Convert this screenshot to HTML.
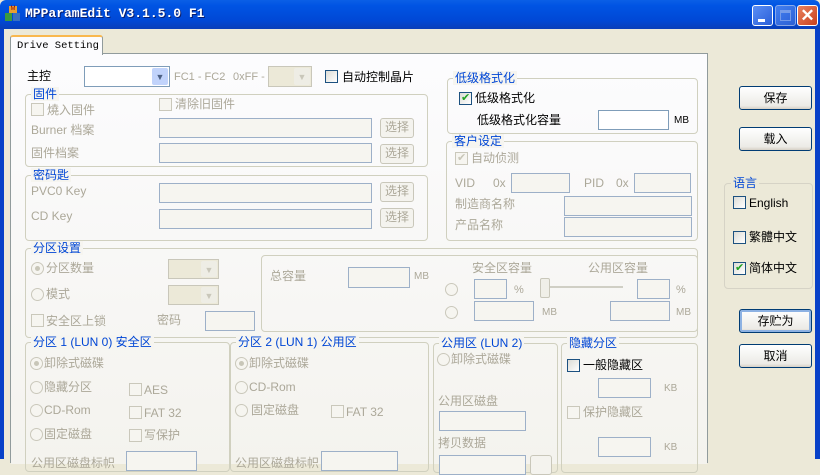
<!DOCTYPE html>
<html><head><meta charset="utf-8">
<style>
*{box-sizing:border-box;margin:0;padding:0}
body{width:820px;height:459px;overflow:hidden;background:#ece9d8;font-family:"Liberation Sans","Noto Sans CJK SC",sans-serif;font-size:12px;color:#000;position:relative}
div,span{position:absolute}
.t{white-space:nowrap;line-height:14px}
.g{color:#aca899}
.gb{border:1px solid #d0d0bf;border-radius:4px}
.gt{color:#0046d5;background:#f6f5f0;padding:0 2px;line-height:14px;white-space:nowrap}
.in{background:#fff;border:1px solid #7f9db9}
.ind{background:#f6f5f0;border:1px solid #9db0c8}
.btn{border:1px solid #003c74;border-radius:3px;background:linear-gradient(#fff,#ecebe6 85%,#d6d0c5);text-align:center;line-height:22px;font-size:12px}
.bd{border:1px solid #c9c7ba;border-radius:3px;background:#f4f3ee;color:#aca899;text-align:center;line-height:17px;font-size:12px}
.cb{width:13px;height:13px;border:1px solid #1c5180;background:linear-gradient(135deg,#dcdcd6,#fff)}
.cbd{width:13px;height:13px;border:1px solid #cac8bb;background:#f6f5f0}
.rd{width:13px;height:13px;border:1px solid #cac8bb;border-radius:50%;background:#f6f5f0}
.rd.on::after{content:"";position:absolute;left:3px;top:3px;width:5px;height:5px;border-radius:50%;background:#c8c6b8}
.ck::after{content:"✔";position:absolute;left:1px;top:-2px;font-size:11px;color:#21a121}
.ckd::after{content:"✔";position:absolute;left:1px;top:-2px;font-size:11px;color:#c8c6b8}
.cmb{border:1px solid #7f9db9;background:#fff}
.cmbd{border:1px solid #c9c7ba;background:#ece9d8}
.arr{right:1px;top:1px;bottom:1px;width:16px;border-radius:2px;background:#c1d3fb;color:#4d6185;font-size:9px;text-align:center;line-height:18px}
.arrd{right:1px;top:1px;bottom:1px;width:16px;border-radius:2px;background:#eeede5;color:#c9c7ba;font-size:9px;text-align:center;line-height:18px}
</style></head><body>
<div style="left:0;top:0;width:820px;height:29px;background:linear-gradient(#0a5fe6,#0054e3 20%,#0048d6 70%,#0a3fb8);border-radius:6px 6px 0 0"></div>
<div style="left:5px;top:6px;width:15px;height:16px">
 <span style="left:4px;top:0;width:8px;height:7px;background:#e8a030;font-size:6px;color:#900;line-height:7px;text-align:center">M</span>
 <span style="left:0;top:7px;width:7px;height:8px;background:#3a9a40"></span>
 <span style="left:8px;top:7px;width:7px;height:8px;background:#3a70c0"></span>
</div>
<div class="t" style="left:25px;top:6px;color:#fff;font-family:'Liberation Mono',monospace;font-weight:bold;font-size:13px;line-height:16px;text-shadow:1px 1px #0a1e6e">MPParamEdit V3.1.5.0 F1</div>
<div style="left:752px;top:5px;width:21px;height:21px;border:1px solid #fff;border-radius:3px;background:linear-gradient(135deg,#5a8ef5,#2a5fd8)"><span style="left:5px;top:13px;width:7px;height:3px;background:#fff"></span></div>
<div style="left:775px;top:5px;width:21px;height:21px;border:1px solid #b7c8f0;border-radius:3px;background:linear-gradient(135deg,#5a8ef5,#3a6ad8);opacity:.75"><span style="left:4px;top:4px;width:11px;height:11px;border:1px solid #9db6ee;border-top-width:3px"></span></div>
<div style="left:797px;top:5px;width:21px;height:21px;border:1px solid #fff;border-radius:3px;background:linear-gradient(135deg,#e9825f,#c8401e);color:#fff;font-size:17px;line-height:19px;text-align:center;font-weight:bold">✕</div>
<div style="left:0;top:29px;width:4px;height:430px;background:#0841c8"></div>
<div style="left:815px;top:29px;width:5px;height:430px;background:#0841c8"></div>
<div style="left:10px;top:53px;width:698px;height:410px;background:#fcfcfe;border:1px solid #919b9c"></div>
<div style="left:11px;top:54px;width:696px;height:410px;background:linear-gradient(#fcfcfe,#f4f3ee)"></div>
<div style="left:10px;top:35px;width:93px;height:20px;background:#fcfcfe;border:1px solid #919b9c;border-bottom:none;border-top:2px solid #f9b84f;border-radius:3px 3px 0 0"></div>
<div class="t" style="left:17px;top:39px;font-family:'Liberation Mono',monospace;font-size:10.5px">Drive Setting</div>

<div class="t" style="left:27px;top:69px">主控</div>
<div class="cmb" style="left:84px;top:66px;width:86px;height:21px"><span class="arr">▼</span></div>
<div class="t g" style="left:174px;top:70px;font-size:11px">FC1 - FC2</div>
<div class="t g" style="left:233px;top:70px;font-size:11px">0xFF -</div>
<div class="cmbd" style="left:268px;top:66px;width:44px;height:21px"><span class="arrd">▼</span></div>
<div class="cb" style="left:325px;top:70px"></div>
<div class="t" style="left:342px;top:70px">自动控制晶片</div>

<div class="gb" style="left:25px;top:94px;width:403px;height:73px"></div>
<div class="gt" style="left:31px;top:87px">固件</div>
<div class="cbd" style="left:31px;top:103px"></div><div class="t g" style="left:47px;top:103px">燒入固件</div>
<div class="cbd" style="left:159px;top:98px"></div><div class="t g" style="left:175px;top:97px">清除旧固件</div>
<div class="t g" style="left:31px;top:123px">Burner 档案</div>
<div class="ind" style="left:159px;top:118px;width:213px;height:20px"></div>
<div class="bd" style="left:380px;top:118px;width:34px;height:20px">选择</div>
<div class="t g" style="left:31px;top:146px">固件档案</div>
<div class="ind" style="left:159px;top:143px;width:213px;height:20px"></div>
<div class="bd" style="left:380px;top:144px;width:34px;height:20px">选择</div>

<div class="gb" style="left:25px;top:175px;width:403px;height:66px"></div>
<div class="gt" style="left:31px;top:168px">密码匙</div>
<div class="t g" style="left:31px;top:184px">PVC0 Key</div>
<div class="ind" style="left:159px;top:183px;width:213px;height:20px"></div>
<div class="bd" style="left:380px;top:182px;width:34px;height:20px">选择</div>
<div class="t g" style="left:31px;top:209px">CD Key</div>
<div class="ind" style="left:159px;top:209px;width:213px;height:20px"></div>
<div class="bd" style="left:380px;top:208px;width:34px;height:20px">选择</div>

<div class="gb" style="left:447px;top:78px;width:251px;height:56px"></div>
<div class="gt" style="left:453px;top:71px">低级格式化</div>
<div class="cb ck" style="left:459px;top:92px"></div><div class="t" style="left:475px;top:91px">低级格式化</div>
<div class="t" style="left:477px;top:113px">低级格式化容量</div>
<div class="in" style="left:598px;top:110px;width:71px;height:20px"></div>
<div class="t" style="left:674px;top:114px;font-size:10px">MB</div>

<div class="gb" style="left:446px;top:141px;width:252px;height:100px"></div>
<div class="gt" style="left:452px;top:134px">客户设定</div>
<div class="cbd ckd" style="left:455px;top:152px"></div><div class="t g" style="left:471px;top:151px">自动侦测</div>
<div class="t g" style="left:455px;top:176px">VID</div><div class="t g" style="left:493px;top:176px">0x</div>
<div class="ind" style="left:511px;top:173px;width:59px;height:20px"></div>
<div class="t g" style="left:584px;top:176px">PID</div><div class="t g" style="left:616px;top:176px">0x</div>
<div class="ind" style="left:634px;top:173px;width:57px;height:20px"></div>
<div class="t g" style="left:455px;top:197px">制造商名称</div>
<div class="ind" style="left:564px;top:196px;width:128px;height:20px"></div>
<div class="t g" style="left:455px;top:218px">产品名称</div>
<div class="ind" style="left:564px;top:217px;width:128px;height:20px"></div>

<div class="gb" style="left:25px;top:248px;width:673px;height:90px"></div>
<div class="gt" style="left:31px;top:241px">分区设置</div>
<div class="rd on" style="left:31px;top:262px"></div><div class="t g" style="left:46px;top:261px">分区数量</div>
<div class="cmbd" style="left:168px;top:259px;width:51px;height:20px"><span class="arrd">▼</span></div>
<div class="rd" style="left:31px;top:288px"></div><div class="t g" style="left:46px;top:287px">模式</div>
<div class="cmbd" style="left:168px;top:285px;width:51px;height:20px"><span class="arrd">▼</span></div>
<div class="cbd" style="left:31px;top:314px"></div><div class="t g" style="left:46px;top:314px">安全区上锁</div>
<div class="t g" style="left:157px;top:313px">密码</div>
<div class="ind" style="left:205px;top:311px;width:50px;height:20px"></div>
<div class="gb" style="left:261px;top:255px;width:437px;height:77px"></div>
<div class="t g" style="left:270px;top:269px">总容量</div>
<div class="ind" style="left:348px;top:267px;width:62px;height:21px"></div>
<div class="t g" style="left:414px;top:270px;font-size:10px">MB</div>
<div class="t g" style="left:472px;top:261px">安全区容量</div>
<div class="t g" style="left:588px;top:261px">公用区容量</div>
<div class="rd" style="left:445px;top:283px"></div>
<div class="ind" style="left:474px;top:279px;width:33px;height:20px"></div>
<div class="t g" style="left:514px;top:283px;font-size:11px">%</div>
<div style="left:545px;top:286px;width:78px;height:2px;background:#d0cfc5"></div>
<div style="left:540px;top:278px;width:10px;height:20px;border:1px solid #c9c7ba;border-radius:2px;background:#f0efe8"></div>
<div class="ind" style="left:637px;top:279px;width:33px;height:20px"></div>
<div class="t g" style="left:676px;top:283px;font-size:11px">%</div>
<div class="rd" style="left:445px;top:306px"></div>
<div class="ind" style="left:474px;top:301px;width:60px;height:20px"></div>
<div class="t g" style="left:542px;top:306px;font-size:10px">MB</div>
<div class="ind" style="left:610px;top:301px;width:60px;height:20px"></div>
<div class="t g" style="left:676px;top:306px;font-size:10px">MB</div>

<div class="gb" style="left:25px;top:342px;width:205px;height:130px"></div>
<div class="gt" style="left:31px;top:335px">分区 1 (LUN 0) 安全区</div>
<div class="rd on" style="left:30px;top:357px"></div><div class="t g" style="left:44px;top:356px">卸除式磁碟</div>
<div class="rd" style="left:30px;top:381px"></div><div class="t g" style="left:44px;top:380px">隐藏分区</div>
<div class="cbd" style="left:129px;top:383px"></div><div class="t g" style="left:144px;top:383px">AES</div>
<div class="rd" style="left:30px;top:404px"></div><div class="t g" style="left:44px;top:403px">CD-Rom</div>
<div class="cbd" style="left:129px;top:406px"></div><div class="t g" style="left:144px;top:406px">FAT 32</div>
<div class="rd" style="left:30px;top:428px"></div><div class="t g" style="left:44px;top:427px">固定磁盘</div>
<div class="cbd" style="left:129px;top:429px"></div><div class="t g" style="left:144px;top:428px">写保护</div>
<div class="t g" style="left:31px;top:456px">公用区磁盘标帜</div>
<div class="ind" style="left:126px;top:451px;width:71px;height:20px"></div>

<div class="gb" style="left:230px;top:342px;width:199px;height:130px"></div>
<div class="gt" style="left:236px;top:335px">分区 2 (LUN 1) 公用区</div>
<div class="rd on" style="left:235px;top:357px"></div><div class="t g" style="left:249px;top:356px">卸除式磁碟</div>
<div class="rd" style="left:235px;top:381px"></div><div class="t g" style="left:249px;top:380px">CD-Rom</div>
<div class="rd" style="left:235px;top:404px"></div><div class="t g" style="left:251px;top:403px">固定磁盘</div>
<div class="cbd" style="left:331px;top:405px"></div><div class="t g" style="left:346px;top:405px">FAT 32</div>
<div class="t g" style="left:235px;top:456px">公用区磁盘标帜</div>
<div class="ind" style="left:321px;top:451px;width:77px;height:20px"></div>

<div class="gb" style="left:433px;top:343px;width:125px;height:130px"></div>
<div class="gt" style="left:439px;top:336px">公用区 (LUN 2)</div>
<div class="rd" style="left:437px;top:353px"></div><div class="t g" style="left:451px;top:352px">卸除式磁碟</div>
<div class="t g" style="left:438px;top:394px">公用区磁盘</div>
<div class="ind" style="left:439px;top:411px;width:87px;height:20px"></div>
<div class="t g" style="left:438px;top:436px">拷贝数据</div>
<div class="ind" style="left:439px;top:455px;width:87px;height:20px"></div>
<div class="bd" style="left:530px;top:455px;width:22px;height:20px"></div>

<div class="gb" style="left:561px;top:343px;width:137px;height:130px"></div>
<div class="gt" style="left:567px;top:336px">隐藏分区</div>
<div class="cb" style="left:567px;top:359px"></div><div class="t" style="left:583px;top:358px">一般隐藏区</div>
<div class="ind" style="left:598px;top:378px;width:53px;height:20px"></div>
<div class="t g" style="left:664px;top:382px;font-size:10px">KB</div>
<div class="cbd" style="left:567px;top:406px"></div><div class="t g" style="left:583px;top:405px">保护隐藏区</div>
<div class="ind" style="left:598px;top:437px;width:53px;height:20px"></div>
<div class="t g" style="left:664px;top:441px;font-size:10px">KB</div>

<div class="btn" style="left:739px;top:86px;width:73px;height:24px">保存</div>
<div class="btn" style="left:739px;top:127px;width:73px;height:24px">载入</div>
<div class="gb" style="left:724px;top:183px;width:89px;height:106px;border-color:#d6d3c6"></div>
<div class="gt" style="left:731px;top:176px;background:#ece9d8">语言</div>
<div class="cb" style="left:733px;top:196px"></div><div class="t" style="left:749px;top:196px">English</div>
<div class="cb" style="left:733px;top:231px"></div><div class="t" style="left:749px;top:230px">繁體中文</div>
<div class="cb ck" style="left:733px;top:262px"></div><div class="t" style="left:749px;top:261px">简体中文</div>
<div class="btn" style="left:739px;top:309px;width:73px;height:24px;box-shadow:inset 0 0 0 2px #8db2e3">存贮为</div>
<div class="btn" style="left:739px;top:344px;width:73px;height:24px">取消</div>
</body></html>
